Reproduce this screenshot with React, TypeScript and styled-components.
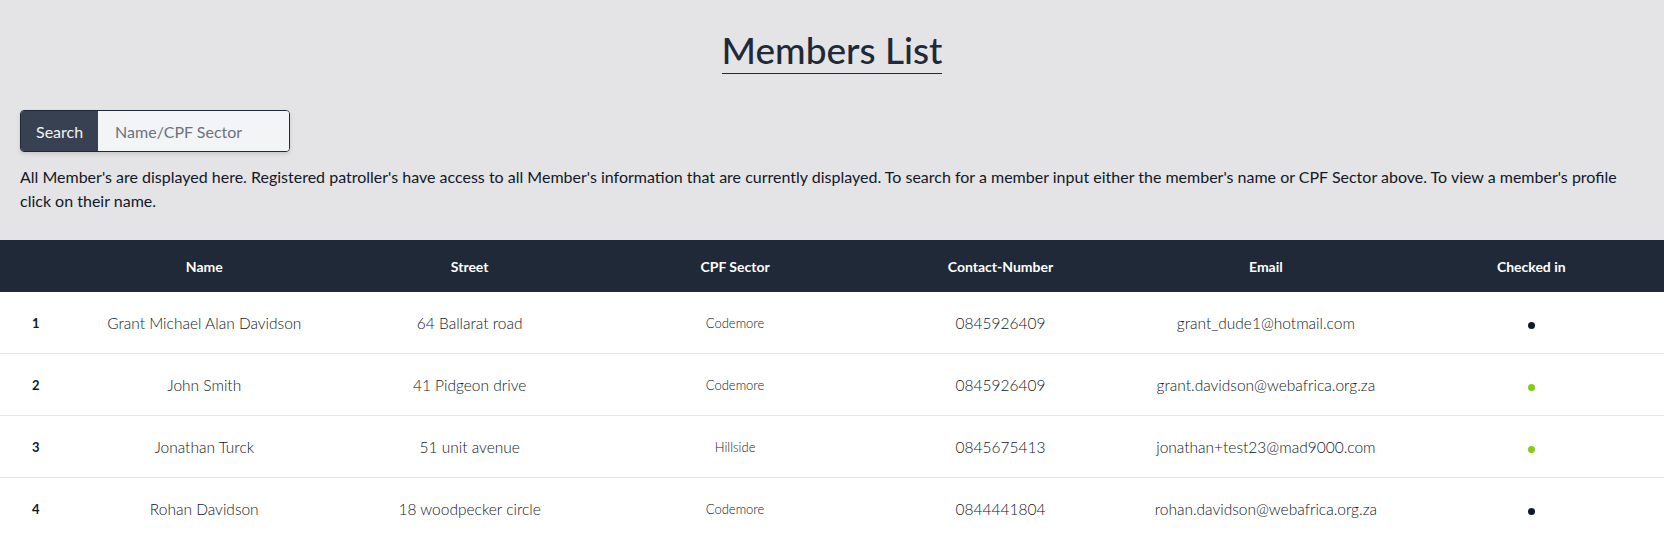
import React from 'react';
import styled, {createGlobalStyle} from 'styled-components';

const GlobalStyle = createGlobalStyle`
	html, body {
		margin: 0;
		padding: 0;
		background-color: #e4e4e7;
		font-family: Lato, "Noto Sans", sans-serif;
		color: #111827;
	}
`;

const Page = styled.div`
	width: 100%;
	min-height: 539px;
	background-color: #e4e4e7;
`;

const Intro = styled.section`
	padding: 30px 20px 27px;
`;

const TitleRow = styled.div`
	display: flex;
	justify-content: center;
`;

const Title = styled.h1`
	margin: 0;
	font-size: 37px;
	line-height: 40px;
	font-weight: 500;
	color: #1f2937;
	border-bottom: 1.5px solid #1f2937;
	padding-bottom: 3px;
`;

const SearchGroup = styled.div`
	display: flex;
	width: 270px;
	height: 42px;
	margin-top: 36px;
	border: 1px solid #1f2937;
	border-radius: 4px;
	overflow: hidden;
	box-shadow: 0 2px 4px rgba(0,0,0,.12);
	box-sizing: border-box;
`;

const SearchLabel = styled.span`
	display: flex;
	align-items: center;
	padding: 0 15px;
	background-color: #374151;
	color: #f3f4f6;
	font-size: 16px;
`;

const SearchInput = styled.input`
	flex: 1;
	min-width: 0;
	border: none;
	outline: none;
	padding: 0 17px;
	background-color: #f3f4f6;
	font-family: inherit;
	font-size: 16px;
	color: #374151;

	&::placeholder {
		color: #6b7280;
	}
`;

const Description = styled.p`
	margin: 13px 0 0;
	font-size: 16px;
	line-height: 24px;
	color: #111827;
`;

const Table = styled.table`
	width: 100%;
	border-collapse: collapse;
	table-layout: fixed;
	background-color: #ffffff;
`;

const Col = styled.col<{$w: string}>`
	width: ${p => p.$w};
`;

const HeadCell = styled.th`
	height: 52px;
	padding: 0 8px;
	background-color: #1f2937;
	color: #ffffff;
	font-size: 14px;
	font-weight: 700;
	text-align: center;
`;

const Row = styled.tr`
	border-bottom: 1px solid #e5e7eb;
`;

const Cell = styled.td<{$small?: boolean; $strong?: boolean}>`
	height: 61px;
	padding: 0 8px;
	text-align: center;
	font-size: ${p => (p.$small ? '13px' : '15.5px')};
	font-weight: ${p => (p.$strong ? 700 : 300)};
	color: #111827;
`;

const Dot = styled.span<{$on: boolean}>`
	display: inline-block;
	width: 7px;
	height: 7px;
	border-radius: 50%;
	background-color: ${p => (p.$on ? '#84cc16' : '#111827')};
`;

const members = [
	{name: 'Grant Michael Alan Davidson', street: '64 Ballarat road', sector: 'Codemore', phone: '0845926409', email: 'grant_dude1@hotmail.com', checked: false},
	{name: 'John Smith', street: '41 Pidgeon drive', sector: 'Codemore', phone: '0845926409', email: 'grant.davidson@webafrica.org.za', checked: true},
	{name: 'Jonathan Turck', street: '51 unit avenue', sector: 'Hillside', phone: '0845675413', email: 'jonathan+test23@mad9000.com', checked: true},
	{name: 'Rohan Davidson', street: '18 woodpecker circle', sector: 'Codemore', phone: '0844441804', email: 'rohan.davidson@webafrica.org.za', checked: false},
];

const headings = ['', 'Name', 'Street', 'CPF Sector', 'Contact-Number', 'Email', 'Checked in'];

const
	App = () => (
		<Page>
			<GlobalStyle />
			<Intro>
				<TitleRow>
					<Title>Members List</Title>
				</TitleRow>
				<SearchGroup>
					<SearchLabel>Search</SearchLabel>
					<SearchInput placeholder="Name/CPF Sector" />
				</SearchGroup>
				<Description>
					All Member's are displayed here. Registered patroller's have access to all Member's information that are currently displayed. To search for a member input either the member's name or CPF Sector above. To view a member's profile click on their name.
				</Description>
			</Intro>
			<Table>
				<colgroup>
					<Col $w="4.3%" />
					{headings.slice(1).map(h => <Col key={h} $w="15.95%" />)}
				</colgroup>
				<thead>
					<tr>
						{headings.map((h, i) => <HeadCell key={i}>{h}</HeadCell>)}
					</tr>
				</thead>
				<tbody>
					{members.map((m, i) => (
						<Row key={m.email}>
							<Cell $strong $small>{i + 1}</Cell>
							<Cell>{m.name}</Cell>
							<Cell>{m.street}</Cell>
							<Cell $small>{m.sector}</Cell>
							<Cell>{m.phone}</Cell>
							<Cell>{m.email}</Cell>
							<Cell><Dot $on={m.checked} /></Cell>
						</Row>
					))}
				</tbody>
			</Table>
		</Page>
	);

export default App;
